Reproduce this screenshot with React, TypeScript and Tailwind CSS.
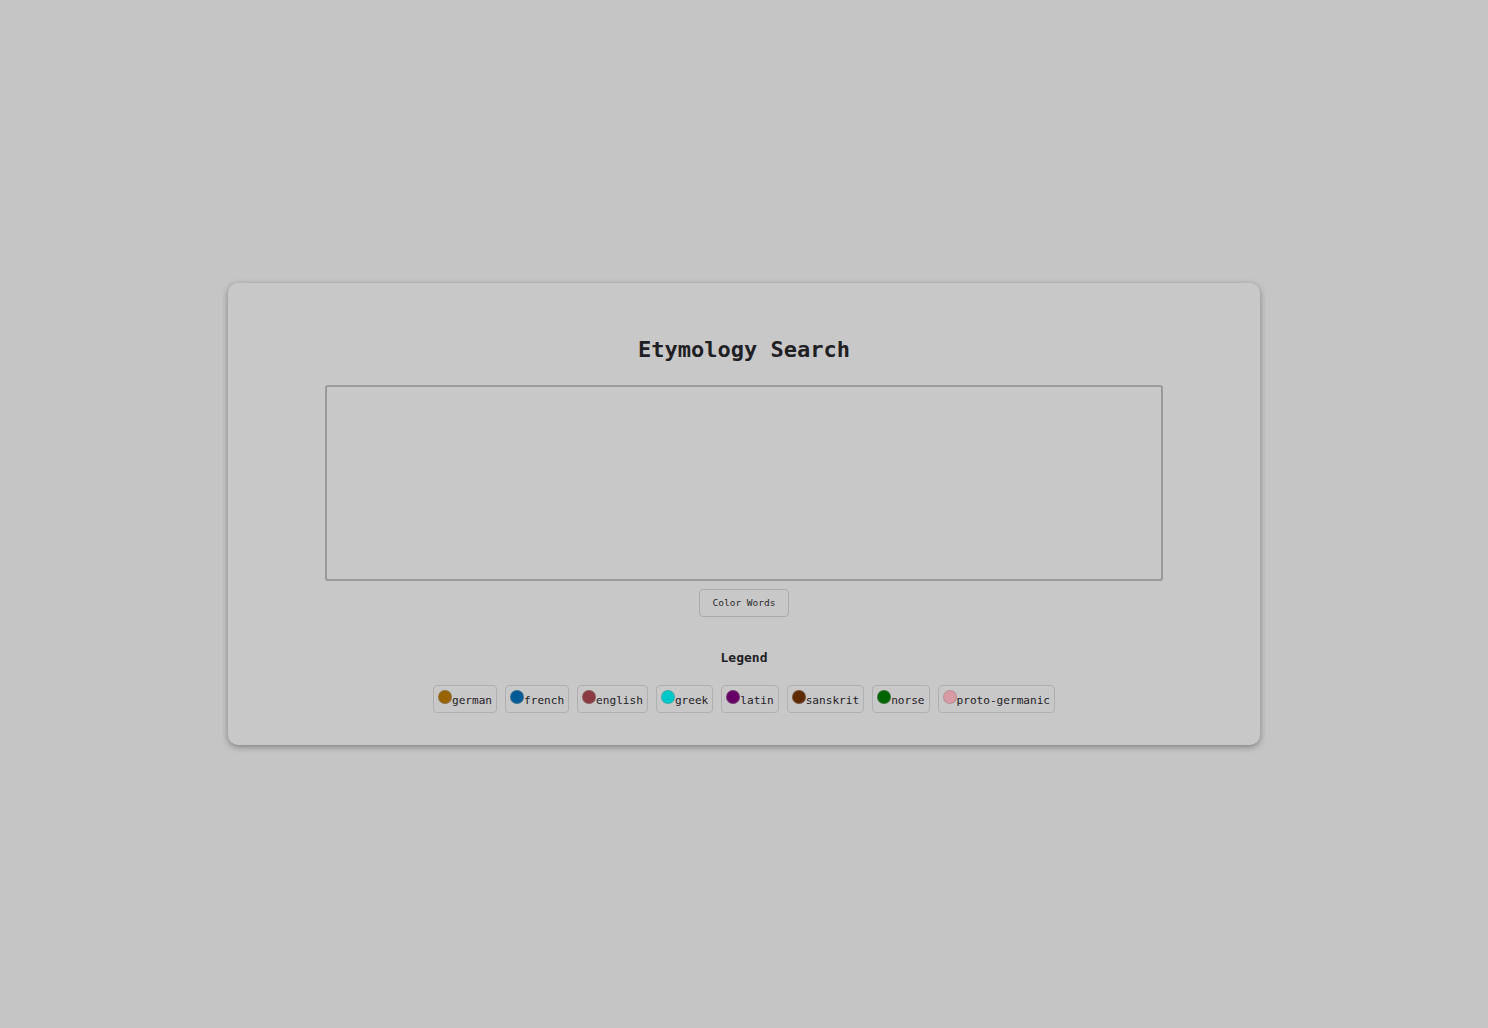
const langs = [
  { name: "german", color: "bg-[#996300]" },
  { name: "french", color: "bg-[#005a96]" },
  { name: "english", color: "bg-[#8a3a40]" },
  { name: "greek", color: "bg-[#00c8c8]" },
  { name: "latin", color: "bg-[#660066]" },
  { name: "sanskrit", color: "bg-[#5f2a00]" },
  { name: "norse", color: "bg-[#006400]" },
  { name: "proto-germanic", color: "bg-[#d89aa4]" },
];

export default function App() {
  return (
    <div className="min-h-screen w-full bg-[#c5c5c5] flex items-center justify-center font-['DejaVu_Sans_Mono',monospace] text-[#1f2024]">
      <div className="w-[1032px] rounded-[10px] bg-[#c8c8c8] shadow-[0_2px_6px_rgba(0,0,0,0.35)] pt-[53px] pb-[32px] flex flex-col items-center">
        <h1 className="text-[22px] leading-[28px] font-bold">Etymology Search</h1>
        <textarea className="mt-[21px] w-[838px] h-[196px] border-2 border-[#9a9a9a] rounded-[3px] bg-transparent resize-none outline-none" />
        <button className="mt-[8px] h-[28px] w-[90px] border border-[#ababab] rounded-[4px] text-[9.5px] text-[#2a2a2a] bg-[#c8c8c8]">
          Color Words
        </button>
        <h2 className="mt-[31px] text-[13px] leading-[20px] font-bold">Legend</h2>
        <div className="mt-[17px] flex gap-[8px]">
          {langs.map((l) => (
            <div
              key={l.name}
              className="h-[28px] flex items-start pt-[3px] pl-[4px] pr-[4px] border border-[#b0b0b0] rounded-[4px] text-[11.1px] leading-[20px]"
            >
              <span className={`w-[14px] h-[14px] rounded-full border border-[#888]/40 ${l.color} mt-[1px]`} />
              <span className="mt-[2px]">{l.name}</span>
            </div>
          ))}
        </div>
      </div>
    </div>
  );
}
